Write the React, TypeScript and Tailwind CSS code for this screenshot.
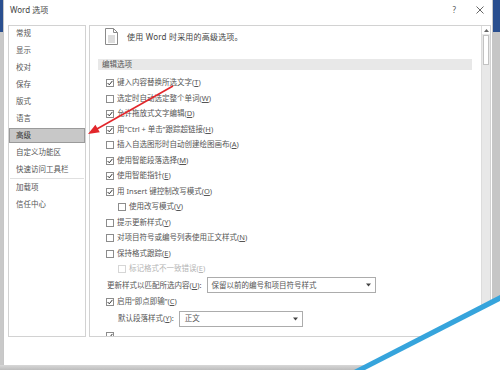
import React from "react";

const FONT = "font-['Noto_Sans','Noto_Sans_CJK_SC',sans-serif]";

function Check({ checked, disabled }: { checked?: boolean; disabled?: boolean }) {
  return (
    <span
      className={
        disabled
          ? "w-[8px] h-[8px] border border-[#d6d6d6] bg-white flex items-center justify-center shrink-0"
          : "w-[8px] h-[8px] border border-[#8c8c8c] bg-white flex items-center justify-center shrink-0"
      }
    >
      {checked && (
        <svg width="6" height="6" viewBox="0 0 6 6">
          <polyline points="0.6,3 2.3,4.8 5.4,0.9" fill="none" stroke="#333" strokeWidth="1" />
        </svg>
      )}
    </span>
  );
}

function Label({ t, k }: { t: string; k: string }) {
  return (
    <span className="whitespace-nowrap">
      {t}(<span className="underline underline-offset-1">{k}</span>)
    </span>
  );
}

type Row = { t: string; k: string; c?: boolean; indent?: boolean; disabled?: boolean };

const rows: Row[] = [
  { t: "键入内容替换所选文字", k: "T", c: true },
  { t: "选定时自动选定整个单词", k: "W" },
  { t: "允许拖放式文字编辑", k: "D", c: true },
  { t: "用“Ctrl + 单击”跟踪超链接", k: "H", c: true },
  { t: "插入自选图形时自动创建绘图画布", k: "A" },
  { t: "使用智能段落选择", k: "M", c: true },
  { t: "使用智能指针", k: "E", c: true },
  { t: "用 Insert 键控制改写模式", k: "O", c: true },
  { t: "使用改写模式", k: "V", indent: true },
  { t: "提示更新样式", k: "Y" },
  { t: "对项目符号或编号列表使用正文样式", k: "N" },
  { t: "保持格式跟踪", k: "E" },
  { t: "标记格式不一致错误", k: "E", indent: true, disabled: true },
];

const nav1 = ["常规", "显示", "校对", "保存", "版式", "语言", "高级", "自定义功能区", "快速访问工具栏"];
const nav2 = ["加载项", "信任中心"];

function Caret() {
  return (
    <svg width="5" height="4" viewBox="0 0 5 4">
      <polygon points="0,0.5 5,0.5 2.5,3.5" fill="#444" />
    </svg>
  );
}

export default function App() {
  return (
    <div className={`relative w-[500px] h-[370px] overflow-hidden bg-[#d2d2d2] ${FONT}`}>
      <div className="flex h-[365px]">
        {/* left edge */}
        <div className="w-[3px] flex flex-col">
          <div className="h-[32px] bg-[#2a4f8f]" />
          <div className="flex-1 bg-[#c9c9c9]" />
        </div>

        {/* dialog */}
        <div className="w-[490px] h-[365px] bg-white border-x border-[#c6c6c6] flex flex-col">
          {/* title bar */}
          <div className="h-[20px] flex items-center justify-between pl-[6px] pr-[8px]">
            <span className="text-[8px] text-[#444] leading-none">Word 选项</span>
            <div className="flex items-center gap-[20px]">
              <span className="text-[8px] text-[#555] leading-none">?</span>
              <svg width="8" height="8" viewBox="0 0 8 8">
                <path d="M0.5 0.5 L7.5 7.5 M7.5 0.5 L0.5 7.5" stroke="#555" strokeWidth="0.9" />
              </svg>
            </div>
          </div>

          {/* body */}
          <div className="flex pt-[5px] pl-[4px] gap-[3px]">
            {/* nav */}
            <div className="w-[78px] h-[312px] border border-[#d2d2d2] flex flex-col text-[7.5px] text-[#555]">
              <div className="flex flex-col -mt-[1px]">
                {nav1.map((n) =>
                  n === "高级" ? (
                    <div key={n} className="h-[17px] flex items-center">
                      <div className="relative z-10 w-[86px] h-[15px] bg-[#c8c8c8] border border-[#9a9a9a] flex items-center pl-[6px] text-[#333]">
                        {n}
                      </div>
                    </div>
                  ) : (
                    <div key={n} className="h-[17px] flex items-center pl-[7px]">
                      {n}
                    </div>
                  )
                )}
                <div className="mx-[1px] h-px bg-[#e0e0e0]" />
                {nav2.map((n) => (
                  <div key={n} className="h-[17px] flex items-center pl-[7px]">
                    {n}
                  </div>
                ))}
              </div>
            </div>

            {/* content panel */}
            <div className="w-[402px] h-[312px] border border-[#d2d2d2] flex">
              <div className="flex-1 overflow-hidden flex flex-col text-[7.5px] text-[#555]">
                {/* header */}
                <div className="mt-[2px] h-[20px] flex items-center pl-[15px] gap-[9px]">
                  <svg width="13" height="17" viewBox="0 0 13 17">
                    <path d="M0.5 0.5 H8.5 L12.5 4.5 V16.5 H0.5 Z" fill="white" stroke="#8a8a8a" />
                    <path d="M8.5 0.5 V4.5 H12.5" fill="none" stroke="#8a8a8a" />
                    <path d="M3 8 H10 M3 10 H10 M3 12 H10 M3 14 H10" stroke="#a8a8a8" strokeWidth="0.8" />
                  </svg>
                  <span className="text-[8px] text-[#444] tracking-[0.2px]">使用 Word 时采用的高级选项。</span>
                </div>

                {/* section bar */}
                <div className="mt-[14px] ml-[8px] w-[374px] h-[15px] bg-[#e8e8e8] flex items-center pl-[4px] text-[#555]">
                  编辑选项
                </div>

                {/* rows */}
                <div className="mt-[5px] pl-[16px] flex flex-col">
                  {rows.map((r, i) => (
                    <div
                      key={i}
                      className={
                        r.indent
                          ? "h-[15.5px] flex items-center gap-[3px] pl-[12px]"
                          : "h-[15.5px] flex items-center gap-[3px]"
                      }
                    >
                      <Check checked={r.c} disabled={r.disabled} />
                      <span className={r.disabled ? "text-[#b4b4b4]" : ""}>
                        <Label t={r.t} k={r.k} />
                      </span>
                    </div>
                  ))}

                  <div className="h-[17px] flex items-center gap-[5px] pl-[1px]">
                    <span className="whitespace-nowrap">
                      更新样式以匹配所选内容(<span className="underline underline-offset-1">U</span>):
                    </span>
                    <div className="w-[169px] h-[16px] border border-[#acacac] flex items-center justify-between pl-[4px] pr-[4px]">
                      <span>保留以前的编号和项目符号样式</span>
                      <Caret />
                    </div>
                  </div>

                  <div className="h-[16px] flex items-center gap-[3px]">
                    <Check checked />
                    <Label t="启用“即点即输”" k="C" />
                  </div>

                  <div className="h-[18px] flex items-center gap-[5px] pl-[12px]">
                    <span className="whitespace-nowrap">
                      默认段落样式(<span className="underline underline-offset-1">Y</span>):
                    </span>
                    <div className="w-[124px] h-[16px] border border-[#acacac] flex items-center justify-between pl-[5px] pr-[4px]">
                      <span>正文</span>
                      <Caret />
                    </div>
                  </div>

                  <div className="h-[15.5px] flex items-center gap-[3px]">
                    <Check checked />
                  </div>
                </div>
              </div>

              {/* scrollbar */}
              <div className="w-[9px] bg-[#e8e8e8] border-l border-[#dcdcdc] flex flex-col">
                <div className="h-[8px] bg-white flex items-center justify-center">
                  <svg width="5" height="3" viewBox="0 0 5 3">
                    <polygon points="0,3 5,3 2.5,0" fill="#666" />
                  </svg>
                </div>
                <div className="mt-[1px] mx-[1px] h-[30px] bg-white border border-[#c2c2c2]" />
              </div>
            </div>
          </div>
        </div>

        {/* right edge */}
        <div className="w-[7px] flex flex-col">
          <div className="h-[32px] bg-[#2a4f8f]" />
          <div className="flex-1 bg-[#c6c6c6]" />
        </div>
      </div>

      {/* bottom strip */}
      <div className="h-[5px] bg-gradient-to-b from-[#d8d8d8] to-[#bdbdbd]" />

      {/* overlay: annotation arrow and corner stripe */}
      <svg className="absolute inset-0 pointer-events-none" width="500" height="370" viewBox="0 0 500 370">
        <line x1="173" y1="86" x2="96" y2="129.5" stroke="#e2262b" strokeWidth="1.6" />
        <polygon points="88,134 99.8,132.3 95.4,124.8" fill="#e2262b" />
        <polygon points="360,370 500,299 500,370" fill="#ffffff" />
        <polygon points="354,370 500,295 500,301 365,370" fill="#36a4dc" />
      </svg>
    </div>
  );
}
